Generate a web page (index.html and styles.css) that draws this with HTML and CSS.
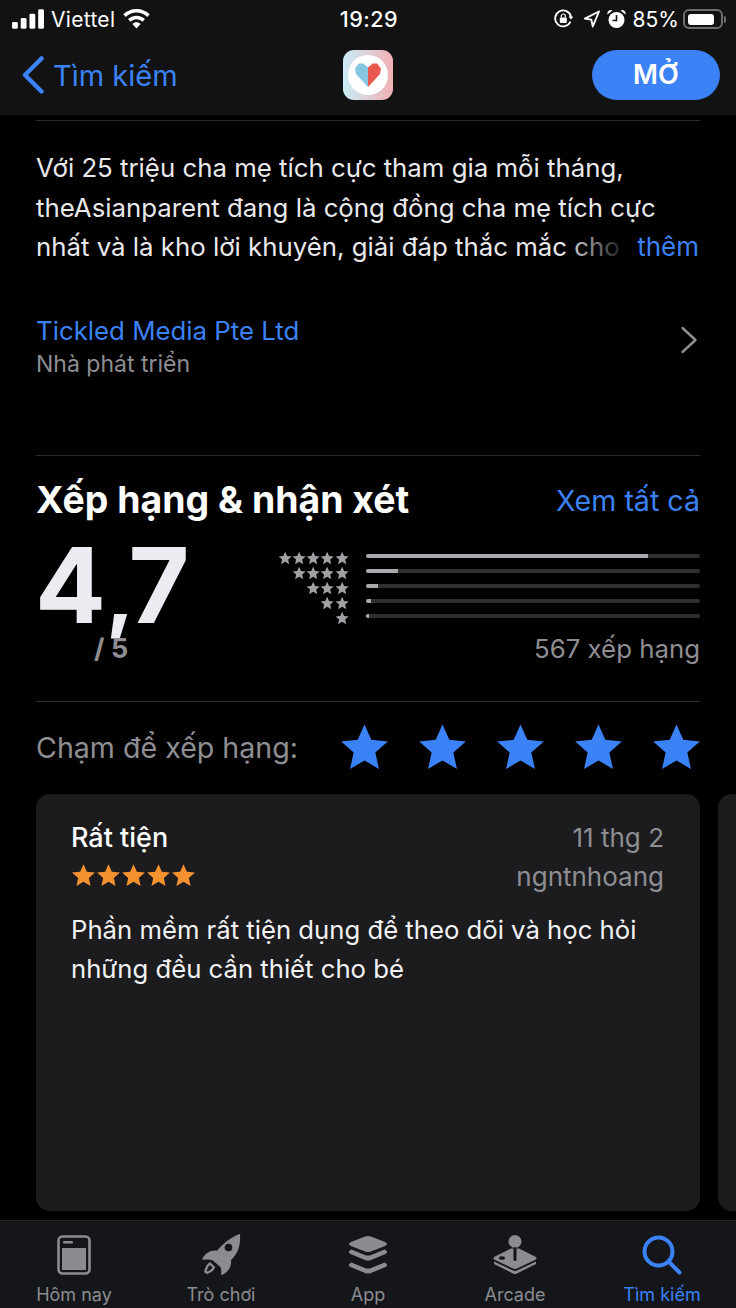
FILE: index.html
```html
<!DOCTYPE html>
<html lang="vi">
<head>
    <meta charset="UTF-8">
    <meta name="viewport" content="width=device-width, initial-scale=1.0">
    <title>theAsianparent</title>
    <link rel="stylesheet" href="styles.css">
</head>
<body>
    <svg class="defs" width="0" height="0">
        <symbol id="star" viewBox="0 0 24 24">
            <path d="M12 1.2l3.2 7.2 7.8.8-5.9 5.2 1.7 7.7L12 18.1l-6.8 4 1.7-7.7L1 9.2l7.8-.8z"/>
        </symbol>
    </svg>

    <div class="phone">
        <div class="top-bar">
            <div class="status-bar">
                <div class="status-left">
                    <svg class="signal" width="32" height="20" viewBox="0 0 33 20"><rect x="0" y="13" width="6" height="7" rx="1.5"/><rect x="9" y="9" width="6" height="11" rx="1.5"/><rect x="18" y="4.500" width="6" height="15.500" rx="1.500"/><rect x="27" y="0" width="6" height="20" rx="1.500"/></svg>
                    <span class="carrier">Viettel</span>
                    <svg class="wifi" width="27" height="20" viewBox="0 0 27 20"><path d="M13.500 0C8.300 0 3.700 2 .3 5.300l2.500 2.600C5.600 5.200 9.300 3.600 13.500 3.600s7.900 1.600 10.700 4.300l2.500-2.600C23.300 2 18.700 0 13.500 0z"/><path d="M13.500 6.700c-3.300 0-6.300 1.300-8.500 3.400l2.500 2.600c1.600-1.500 3.700-2.400 6-2.400s4.400.9 6 2.400l2.500-2.600c-2.200-2.100-5.200-3.400-8.500-3.400z"/><path d="M13.500 13.300c-1.600 0-3 .6-4.100 1.600l4.100 4.600 4.100-4.600c-1.100-1-2.500-1.600-4.100-1.600z"/></svg>
                </div>
                <div class="status-time">19:29</div>
                <div class="status-right">
                    <svg class="lock-icon" width="19" height="20" viewBox="0 0 19 20" fill="none"><path d="M16.500 12.500A8 8 0 1 1 17 8" stroke="#fff" stroke-width="1.800"/><path d="M14.500 7.500h5l-2.500 3z" fill="#fff"/><rect x="5.800" y="8.500" width="7" height="5.500" rx="1" fill="#fff"/><path d="M7.300 8.500V7a2 2 0 0 1 4 0v1.500" stroke="#fff" stroke-width="1.200"/></svg>
                    <svg width="17" height="18" viewBox="0 0 17 18" fill="none"><path d="M16 1.500L1.800 8.600l6.500 1 1.500 6.900z" stroke="#fff" stroke-width="1.900" stroke-linejoin="round"/></svg>
                    <svg width="19" height="20" viewBox="0 0 19 20"><circle cx="9.500" cy="11" r="8" fill="#fff"/><path d="M9.500 6v5.500h-4" fill="none" stroke="#121212" stroke-width="1.600"/><path d="M.5 5.500a3.500 3.500 0 0 1 5-4zM18.500 5.500a3.500 3.500 0 0 0-5-4z" fill="#fff"/></svg>
                    <span class="battery-text">85%</span>
                    <div class="battery"><div class="battery-fill"></div></div>
                    <div class="battery-tip"></div>
                </div>
            </div>
            <div class="nav-bar">
                <div class="back">
                    <svg width="24" height="38" viewBox="0 0 24 38" fill="none"><path d="M20.500 2.500L4 19l16.500 16.500" stroke="#3b82f6" stroke-width="4.500" stroke-linecap="round" stroke-linejoin="round"/></svg>
                    <span>Tìm kiếm</span>
                </div>
                <div class="app-icon">
                    <div class="app-circle">
                        <svg width="26" height="24" viewBox="0 0 28 26"><path d="M14 5L9 .5H4L0 6l1 6 13 14z" fill="#86c6e0"/><path d="M14 5l5-4.500h5L28 6l-1 6-13 14z" fill="#e85a4f"/></svg>
                    </div>
                </div>
                <div class="open-btn">MỞ</div>
            </div>
        </div>

        <div class="content">
            <div class="hr hr-first"></div>
            <div class="desc">
                Với 25 triệu cha mẹ tích cực tham gia mỗi tháng,<br>
                theAsianparent đang là cộng đồng cha mẹ tích cực<br>
                nhất và là kho lời khuyên, giải đáp thắc mắc cho
                <span class="more">thêm</span>
            </div>

            <div class="dev">
                <div>
                    <div class="dev-name">Tickled Media Pte Ltd</div>
                    <div class="dev-label">Nhà phát triển</div>
                </div>
                <svg class="dev-arrow" width="18" height="28" viewBox="0 0 18 28" fill="none"><path d="M2.500 2l13 12-13 12" stroke="#8e8e93" stroke-width="2.400" stroke-linecap="round" stroke-linejoin="round"/></svg>
            </div>

            <div class="hr"></div>

            <div class="section-head">
                <h2>Xếp hạng &amp; nhận xét</h2>
                <span class="see-all">Xem tất cả</span>
            </div>

            <div class="summary">
                <div class="score">
                    <div class="score-num">4<span class="score-comma">,</span>7</div>
                    <div class="score-max">/ 5</div>
                </div>
                <div class="hist">
                    <div class="hist-rows">
                        <div class="hist-row">
                            <div class="mini-stars"><svg><use href="#star"/></svg><svg><use href="#star"/></svg><svg><use href="#star"/></svg><svg><use href="#star"/></svg><svg><use href="#star"/></svg></div>
                            <div class="track"><div class="fill" style="width: 282px"></div></div>
                        </div>
                        <div class="hist-row">
                            <div class="mini-stars"><svg><use href="#star"/></svg><svg><use href="#star"/></svg><svg><use href="#star"/></svg><svg><use href="#star"/></svg></div>
                            <div class="track"><div class="fill" style="width: 32px"></div></div>
                        </div>
                        <div class="hist-row">
                            <div class="mini-stars"><svg><use href="#star"/></svg><svg><use href="#star"/></svg><svg><use href="#star"/></svg></div>
                            <div class="track"><div class="fill" style="width: 12px"></div></div>
                        </div>
                        <div class="hist-row">
                            <div class="mini-stars"><svg><use href="#star"/></svg><svg><use href="#star"/></svg></div>
                            <div class="track"><div class="fill" style="width: 5px"></div></div>
                        </div>
                        <div class="hist-row">
                            <div class="mini-stars"><svg><use href="#star"/></svg></div>
                            <div class="track"><div class="fill" style="width: 3px"></div></div>
                        </div>
                    </div>
                    <div class="rating-count">567 xếp hạng</div>
                </div>
            </div>

            <div class="hr"></div>

            <div class="tap-rate">
                <span>Chạm để xếp hạng:</span>
                <div class="tap-stars">
                    <svg><use href="#star"/></svg>
                    <svg><use href="#star"/></svg>
                    <svg><use href="#star"/></svg>
                    <svg><use href="#star"/></svg>
                    <svg><use href="#star"/></svg>
                </div>
            </div>

            <div class="reviews">
                <div class="review">
                    <div class="review-head">
                        <div>
                            <div class="review-title">Rất tiện</div>
                            <div class="review-stars"><svg><use href="#star"/></svg><svg><use href="#star"/></svg><svg><use href="#star"/></svg><svg><use href="#star"/></svg><svg><use href="#star"/></svg></div>
                        </div>
                        <div class="review-meta">
                            <div>11 thg 2</div>
                            <div class="review-author">ngntnhoang</div>
                        </div>
                    </div>
                    <p class="review-body">Phần mềm rất tiện dụng để theo dõi và học hỏi<br>những đều cần thiết cho bé</p>
                </div>
                <div class="review"></div>
            </div>
        </div>

        <div class="tab-bar">
            <div class="tab">
                <svg width="34" height="40" viewBox="0 0 34 40" fill="none"><rect x="1.500" y="1.500" width="31" height="37" rx="4" stroke="#8b8c90" stroke-width="2.600"/><rect x="5" y="13" width="24" height="22" fill="#8b8c90"/><rect x="6" y="6" width="10" height="2.400" rx="1" fill="#8b8c90"/></svg>
                <span>Hôm nay</span>
            </div>
            <div class="tab">
                <svg width="40" height="42" viewBox="0 0 40 42"><path d="M39 0c.6 9-1 17-6.500 23.500L30 26c.5 4-.5 7.500-3 10.500-1.500 1.800-3.500 3.300-6 4.500l-1-.5c.6-2.800.4-5.400-.6-7.500L12 26.500C9.800 25.500 7.300 25.300 4.500 25.800L1 25.500C2 23 3.500 21 5.500 19.500c3-2.300 6.500-3.300 10.500-2.800L18.500 14C24 8 31 2.500 39 0z" fill="#8b8c90"/><circle cx="27.500" cy="13.500" r="3.800" fill="#14161a"/><path d="M9 29.500l3.800 3.700c-1 2.700-3.200 4.600-6.700 5.600l-1.600-.9c.4-3.800 2-6.700 4.500-8.400z" fill="none" stroke="#8b8c90" stroke-width="2.400"/></svg>
                <span>Trò chơi</span>
            </div>
            <div class="tab">
                <svg width="40" height="40" viewBox="0 0 40 40" fill="#8b8c90"><path d="M17 1.500c2-.8 4-.8 6 0L37 7c2.500 1 2.500 3 0 4l-14 5.500c-2 .8-4 .8-6 0L3 11C.5 10 .5 8 3 7z"/><path d="M3.500 14.500L17 20c2 .8 4 .8 6 0l13.500-5.500c3 1.500 3.500 3.500 1 4.500L23 25c-2 .8-4 .8-6 0L2.500 19C0 18 .5 16 3.500 14.500z"/><path d="M3.500 27.500L17 33c2 .8 4 .8 6 0l13.500-5.500c3 1.500 3.500 3.500 1 4.500L23 38c-2 .8-4 .8-6 0L2.500 32C0 31 .5 29 3.500 27.500z"/></svg>
                <span>App</span>
            </div>
            <div class="tab">
                <svg width="44" height="40" viewBox="0 0 44 40" fill="#8b8c90"><circle cx="22" cy="6.500" r="6.500"/><rect x="21" y="12" width="2" height="3"/><path d="M18 13.500h8l16 8c2 1 2 2.500 0 3.500l-18 8.500c-1.300.6-2.700.6-4 0L2 25c-2-1-2-2.500 0-3.500z"/><path d="M1 26.500l19 9c1.300.6 2.700.6 4 0l19-9v2.500L24 38.500c-1.300.7-2.700.7-4 0L1 29z"/><rect x="20.500" y="12" width="3" height="14" rx="1.500" fill="#14161a"/><ellipse cx="9" cy="23" rx="3" ry="1.800" fill="#14161a"/></svg>
                <span>Arcade</span>
            </div>
            <div class="tab active">
                <svg width="40" height="40" viewBox="0 0 40 40" fill="none"><circle cx="16.500" cy="16.500" r="14" stroke="#3b82f6" stroke-width="4"/><path d="M27 27l10.500 10.500" stroke="#3b82f6" stroke-width="4" stroke-linecap="round"/></svg>
                <span>Tìm kiếm</span>
            </div>
        </div>
    </div>
</body>
</html>
```

FILE: styles.css
```css
* {
    box-sizing: border-box;
}
body {
    margin: 0;
    background-color: #000;
    font-family: Inter, "Noto Sans", sans-serif;
    color: #fff;
}
.defs {
    position: absolute;
}
.phone {
    width: 736px;
    height: 1308px;
    display: flex;
    flex-direction: column;
    overflow: hidden;
}

/* top */
.top-bar {
    height: 115px;
    flex: none;
    background-color: #121212;
}
.status-bar {
    height: 38px;
    padding: 0 10px 0 12px;
    display: grid;
    grid-template-columns: 1fr auto 1fr;
    align-items: center;
    font-size: 21px;
}
.status-left {
    display: flex;
    align-items: center;
    gap: 7px;
}
.status-left svg {
    fill: #fff;
}
.carrier {
    margin-right: 1px;
    letter-spacing: 0.3px;
}
.status-time {
    font-size: 21.500px;
    font-weight: 500;
    letter-spacing: 0.5px;
}
.status-right {
    display: flex;
    align-items: center;
    justify-content: flex-end;
    gap: 7px;
}
.lock-icon {
    margin-right: 3px;
}
.battery-text {
    margin-right: -3px;
}
.battery {
    width: 40px;
    height: 20px;
    padding: 2.500px;
    border: 2px solid #6d6d70;
    border-radius: 6px;
}
.battery-fill {
    width: 86%;
    height: 100%;
    background-color: #fff;
    border-radius: 3px;
}
.battery-tip {
    width: 2px;
    height: 7px;
    margin-left: -6px;
    background-color: #6d6d70;
    border-radius: 0 2px 2px 0;
}
.nav-bar {
    height: 74px;
    padding: 0 16px;
    display: grid;
    grid-template-columns: 1fr auto 1fr;
    align-items: center;
}
.back {
    margin-left: 5px;
    display: flex;
    align-items: center;
    gap: 8px;
    font-size: 29px;
    color: #3b82f6;
}
.app-icon {
    width: 50px;
    height: 50px;
    display: flex;
    align-items: center;
    justify-content: center;
    border-radius: 11px;
    background: linear-gradient(to right, #c9edf6, #f2b0b3);
}
.app-circle {
    width: 40px;
    height: 40px;
    display: flex;
    align-items: center;
    justify-content: center;
    background-color: #fff;
    border-radius: 50%;
}
.open-btn {
    justify-self: end;
    width: 128px;
    height: 50px;
    line-height: 50px;
    text-align: center;
    background-color: #3b82f6;
    border-radius: 25px;
    font-size: 27px;
    font-weight: 600;
}

/* content */
.content {
    flex: 1;
    min-height: 0;
    padding: 0 36px;
    overflow: hidden;
}
.hr {
    height: 1px;
    background-color: #2c2c2e;
}
.hr-first {
    margin-top: 5px;
}
.desc {
    position: relative;
    margin-top: 27px;
    font-size: 25.800px;
    line-height: 39.500px;
    color: #e9e9ec;
    white-space: nowrap;
}
.more {
    position: absolute;
    right: 1px;
    bottom: 0;
    padding-left: 66px;
    font-size: 26px;
    color: #3b82f6;
    background: linear-gradient(to right, rgba(0, 0, 0, 0.1), #000 58px);
}
.dev {
    margin-top: 49px;
    display: flex;
    align-items: center;
    justify-content: space-between;
    padding-right: 2px;
}
.dev-arrow {
    margin-bottom: 14px;
}
.dev-name {
    font-size: 25.800px;
    line-height: 30px;
    color: #3b82f6;
}
.dev-label {
    margin-top: 3px;
    font-size: 23px;
    line-height: 30px;
    color: #8e8e93;
}
.section-head {
    margin-top: 22px;
    height: 44px;
    display: flex;
    align-items: center;
    justify-content: space-between;
}
.section-head h2 {
    margin: 0;
    font-size: 37.400px;
    font-weight: 700;
}
.see-all {
    padding-top: 2px;
    font-size: 28.600px;
    color: #3b82f6;
}
.dev + .hr {
    margin-top: 76px;
}
.summary {
    height: 179px;
    display: flex;
    justify-content: space-between;
}
.score {
    padding-top: 15px;
}
.score-num {
    height: 95px;
    margin-left: -1px;
    font-size: 105px;
    line-height: 95px;
    font-weight: 700;
    letter-spacing: -2.500px;
    color: #ebebf2;
}
.score-comma {
    margin-left: 3px;
    margin-right: -3px;
    font-size: 78px;
    font-weight: 800;
}
.score-max {
    margin-top: 2px;
    padding-left: 58px;
    font-size: 27px;
    line-height: 30px;
    font-weight: 700;
    color: #8e8e93;
}
.hist {
    width: 430px;
    padding-top: 27px;
}
.hist-row {
    height: 15px;
    display: flex;
    align-items: center;
    justify-content: flex-end;
    gap: 17px;
}
.mini-stars {
    margin-top: 4px;
    display: flex;
    fill: #a0a0a5;
}
.mini-stars svg {
    width: 14.300px;
    height: 14.300px;
}
.track {
    flex: none;
    width: 334px;
    height: 4px;
    background-color: #2f2f32;
    border-radius: 2px;
    overflow: hidden;
}
.fill {
    height: 100%;
    background-color: #a9a9ae;
}
.rating-count {
    margin-top: 9px;
    text-align: right;
    font-size: 25.800px;
    line-height: 32px;
    color: #8e8e93;
}
.tap-rate {
    height: 92px;
    display: flex;
    align-items: center;
    justify-content: space-between;
    font-size: 28.600px;
    color: #8e8e93;
}
.tap-stars {
    margin-right: -2px;
    display: flex;
    gap: 27px;
    fill: #3b82f6;
}
.tap-stars svg {
    width: 51px;
    height: 51px;
}
.reviews {
    display: flex;
    gap: 18px;
}
.review {
    flex: none;
    width: 664px;
    height: 417px;
    padding: 29px 36px 28px 35px;
    background-color: #1c1c1e;
    border-radius: 14px;
}
.review-head {
    display: flex;
    justify-content: space-between;
}
.review-title {
    font-size: 27px;
    line-height: 30px;
    font-weight: 500;
}
.review-stars {
    margin-top: 10px;
    display: flex;
    fill: #f5922f;
}
.review-stars svg {
    width: 25px;
    height: 25px;
}
.review-meta {
    text-align: right;
    font-size: 26px;
    line-height: 30px;
    color: #8e8e93;
}
.review-author {
    margin-top: 9px;
}
.review-body {
    margin: 18px 0 0;
    font-size: 25.700px;
    line-height: 39px;
    color: #f2f2f4;
    white-space: nowrap;
}

/* tabs */
.tab-bar {
    height: 88px;
    flex: none;
    padding-top: 13px;
    display: flex;
    justify-content: center;
    background-color: #14161a;
    border-top: 1px solid #232428;
}
.tab {
    width: 147px;
    display: flex;
    flex-direction: column;
    align-items: center;
    font-size: 18px;
    color: #8b8c90;
}
.tab svg {
    height: 42px;
    margin-bottom: 8px;
}
.tab.active {
    color: #3b82f6;
}
```
